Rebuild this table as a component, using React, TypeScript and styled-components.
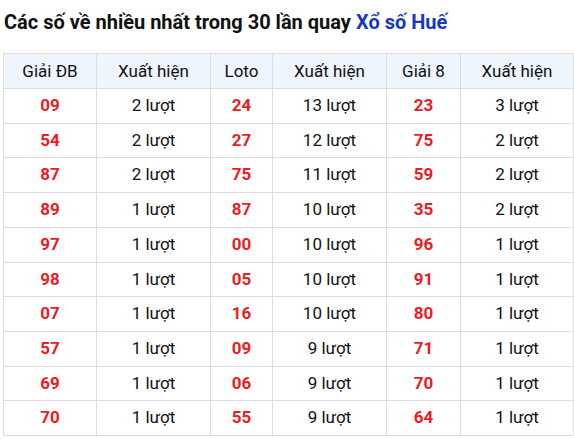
import React from 'react';
import styled, { createGlobalStyle } from 'styled-components';

const GlobalStyle = createGlobalStyle`
  body {
    margin: 0;
    background: #fff;
    font-family: Roboto, 'Liberation Sans', sans-serif;
    color: #111;
  }
`;

type Row = [string, string, string, string, string, string];

const rows: Row[] = [
  ['09', '2 lượt', '24', '13 lượt', '23', '3 lượt'],
  ['54', '2 lượt', '27', '12 lượt', '75', '2 lượt'],
  ['87', '2 lượt', '75', '11 lượt', '59', '2 lượt'],
  ['89', '1 lượt', '87', '10 lượt', '35', '2 lượt'],
  ['97', '1 lượt', '00', '10 lượt', '96', '1 lượt'],
  ['98', '1 lượt', '05', '10 lượt', '91', '1 lượt'],
  ['07', '1 lượt', '16', '10 lượt', '80', '1 lượt'],
  ['57', '1 lượt', '09', '9 lượt', '71', '1 lượt'],
  ['69', '1 lượt', '06', '9 lượt', '70', '1 lượt'],
  ['70', '1 lượt', '55', '9 lượt', '64', '1 lượt'],
];

const headers = ['Giải ĐB', 'Xuất hiện', 'Loto', 'Xuất hiện', 'Giải 8', 'Xuất hiện'];
const widths = [93, 114, 62, 114, 74, 113];

const App = () => {
  return (
    <>
      <GlobalStyle />
      <Wrapper>
        <Title>
          Các số về nhiều nhất trong 30 lần quay <Highlight>Xổ số Huế</Highlight>
        </Title>
        <Table>
          <colgroup>
            {widths.map((w, i) => (
              <col key={i} style={{ width: w }} />
            ))}
          </colgroup>
          <thead>
            <tr>
              {headers.map((h, i) => (
                <HeadCell key={i}>{h}</HeadCell>
              ))}
            </tr>
          </thead>
          <tbody>
            {rows.map((r, i) => (
              <tr key={i}>
                {r.map((c, j) => (
                  <Cell key={j} $number={j % 2 === 0}>
                    {c}
                  </Cell>
                ))}
              </tr>
            ))}
          </tbody>
        </Table>
      </Wrapper>
    </>
  );
};

export default App;

const Wrapper = styled.div`
  padding: 10px 0 0 3px;
  width: 574px;
  box-sizing: border-box;
`;

const Title = styled.h2`
  margin: 0 0 19px 1px;
  font-size: 20px;
  font-weight: 700;
  line-height: 24px;
  color: #111;
`;

const Highlight = styled.span`
  color: #1739bf;
`;

const Table = styled.table`
  border-collapse: collapse;
  table-layout: fixed;
  width: 570px;
`;

const HeadCell = styled.th`
  background: #eef5fd;
  border: 1px solid #dcdde2;
  padding: 8px 4px;
  font-size: 17px;
  font-weight: 400;
  line-height: 18px;
  text-align: center;
  color: #111;
`;

const Cell = styled.td<{ $number?: boolean }>`
  border: 1px solid #dcdde2;
  padding: 8px 4px;
  font-size: 17px;
  line-height: 17.7px;
  text-align: center;
  font-weight: ${({ $number }) => ($number ? 700 : 400)};
  color: ${({ $number }) => ($number ? '#ec1c24' : '#111')};
`;
